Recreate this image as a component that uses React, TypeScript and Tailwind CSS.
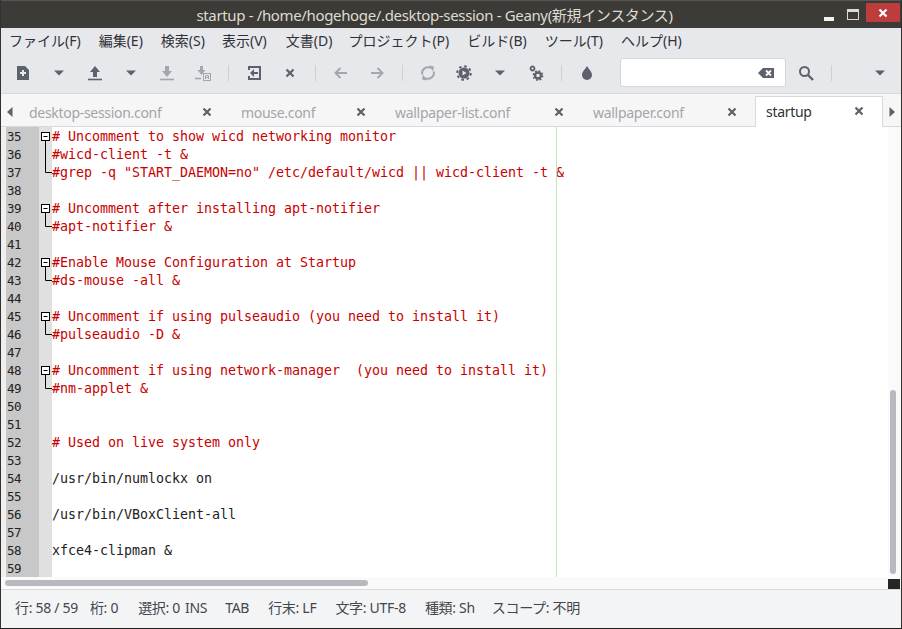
const UI_FONT = "font-['Noto_Sans','Noto_Sans_CJK_JP',sans-serif]";

const MENU = [
  { label: 'ファイル(F)', cls: 'mr-[18px]' },
  { label: '編集(E)', cls: 'mr-[18px]' },
  { label: '検索(S)', cls: 'mr-[17px]' },
  { label: '表示(V)', cls: 'mr-[19px]' },
  { label: '文書(D)', cls: 'mr-[16px]' },
  { label: 'プロジェクト(P)', cls: 'mr-[18px]' },
  { label: 'ビルド(B)', cls: 'mr-[18px]' },
  { label: 'ツール(T)', cls: 'mr-[18px]' },
  { label: 'ヘルプ(H)', cls: '' },
];

const TABS = [
  { name: 'desktop-session.conf', width: 'w-[212px]' },
  { name: 'mouse.conf', width: 'w-[154px]' },
  { name: 'wallpaper-list.conf', width: 'w-[198px]' },
  { name: 'wallpaper.conf', width: 'w-[173px]' },
];

type Fold = 'open' | 'line' | 'end' | '';

const LINES: { n: number; text: string; red?: boolean; fold: Fold }[] = [
  { n: 35, text: '# Uncomment to show wicd networking monitor', red: true, fold: 'open' },
  { n: 36, text: '#wicd-client -t &', red: true, fold: 'line' },
  { n: 37, text: '#grep -q "START_DAEMON=no" /etc/default/wicd || wicd-client -t &', red: true, fold: 'end' },
  { n: 38, text: '', fold: '' },
  { n: 39, text: '# Uncomment after installing apt-notifier', red: true, fold: 'open' },
  { n: 40, text: '#apt-notifier &', red: true, fold: 'end' },
  { n: 41, text: '', fold: '' },
  { n: 42, text: '#Enable Mouse Configuration at Startup', red: true, fold: 'open' },
  { n: 43, text: '#ds-mouse -all &', red: true, fold: 'end' },
  { n: 44, text: '', fold: '' },
  { n: 45, text: '# Uncomment if using pulseaudio (you need to install it)', red: true, fold: 'open' },
  { n: 46, text: '#pulseaudio -D &', red: true, fold: 'end' },
  { n: 47, text: '', fold: '' },
  { n: 48, text: '# Uncomment if using network-manager  (you need to install it)', red: true, fold: 'open' },
  { n: 49, text: '#nm-applet &', red: true, fold: 'end' },
  { n: 50, text: '', fold: '' },
  { n: 51, text: '', fold: '' },
  { n: 52, text: '# Used on live system only', red: true, fold: '' },
  { n: 53, text: '', fold: '' },
  { n: 54, text: '/usr/bin/numlockx on', fold: '' },
  { n: 55, text: '', fold: '' },
  { n: 56, text: '/usr/bin/VBoxClient-all', fold: '' },
  { n: 57, text: '', fold: '' },
  { n: 58, text: 'xfce4-clipman &', fold: '' },
  { n: 59, text: '', fold: '' },
];

function Glyph({ children, w = 16, h = 16 }: { children: React.ReactNode; w?: number; h?: number }) {
  return (
    <svg width={w} height={h} viewBox={`0 0 ${w} ${h}`} className="block">
      {children}
    </svg>
  );
}

function Caret({ fill = '#5c616c' }: { fill?: string }) {
  return (
    <Glyph w={12} h={6}>
      <path d="M1 0.5h10L6 5.5z" fill={fill} />
    </Glyph>
  );
}

function CloseX({ fill = '#5c616c' }: { fill?: string }) {
  return (
    <Glyph w={10} h={10}>
      <path d="M1.5 1.5l7 7M8.5 1.5l-7 7" stroke={fill} strokeWidth="2.2" fill="none" />
    </Glyph>
  );
}

function ToolBtn({ children }: { children: React.ReactNode }) {
  return <div className="w-[36px] shrink-0 flex items-center justify-center">{children}</div>;
}

function ToolSep() {
  return (
    <div className="w-[15px] shrink-0 flex justify-center">
      <div className="w-px h-[16px] bg-[#ced0d4]" />
    </div>
  );
}

function Toolbar() {
  const dark = '#5c616c';
  const dim = '#a4a6ab';
  return (
    <div className="h-[38px] flex items-center pl-[4px] pb-[3px] bg-[#e7e8eb] shrink-0">
      <ToolBtn>
        <Glyph>
          <path d="M2 1h8l4 4v10H2z" fill={dark} />
          <path d="M8 5v6M5 8h6" stroke="#e7e8eb" strokeWidth="2" />
        </Glyph>
      </ToolBtn>
      <ToolBtn><Caret /></ToolBtn>
      <ToolBtn>
        <Glyph>
          <path d="M8 1l5 6h-3v5H6V7H3z" fill={dark} />
          <path d="M1 14.5h14" stroke={dark} strokeWidth="1.6" />
        </Glyph>
      </ToolBtn>
      <ToolBtn><Caret /></ToolBtn>
      <ToolBtn>
        <Glyph>
          <path d="M6 1h4v5h3l-5 6-5-6h3z" fill={dim} />
          <path d="M1 14.5h14" stroke={dim} strokeWidth="1.6" />
        </Glyph>
      </ToolBtn>
      <ToolBtn>
        <Glyph>
          <path d="M5 1h3v4h2.5L6.500 10 2.500 5H5z" fill={dim} />
          <path d="M0 13.500h6" stroke={dim} strokeWidth="1.6" />
          <rect x="8.500" y="8.500" width="7" height="7" fill="none" stroke={dim} />
          <path d="M10.500 14v-3.500h3V14M10.500 12.500h3" fill="none" stroke={dim} />
        </Glyph>
      </ToolBtn>
      <ToolSep />
      <ToolBtn>
        <Glyph>
          <path d="M3 5V2h11v12H3v-3" fill="none" stroke={dark} strokeWidth="2" />
          <path d="M4 8l4-4v3h4v2H8v3z" fill={dark} />
        </Glyph>
      </ToolBtn>
      <ToolBtn><CloseX /></ToolBtn>
      <ToolSep />
      <ToolBtn>
        <Glyph>
          <path d="M14 8H3M7.500 3L2.500 8l5 5" fill="none" stroke={dim} strokeWidth="2" />
        </Glyph>
      </ToolBtn>
      <ToolBtn>
        <Glyph>
          <path d="M2 8h11M8.500 3l5 5-5 5" fill="none" stroke={dim} strokeWidth="2" />
        </Glyph>
      </ToolBtn>
      <ToolSep />
      <ToolBtn>
        <Glyph>
          <path d="M2.200 9.500A6 6 0 0 1 11 3" fill="none" stroke={dim} strokeWidth="2" />
          <path d="M13.800 6.500A6 6 0 0 1 5 13" fill="none" stroke={dim} strokeWidth="2" />
          <path d="M9 0.500l5 1-1 5zM7 15.500l-5-1 1-5z" fill={dim} />
        </Glyph>
      </ToolBtn>
      <ToolBtn>
        <Glyph>
          <circle cx="8" cy="8" r="5.500" fill={dark} />
          <circle cx="8" cy="8" r="6.800" fill="none" stroke={dark} strokeWidth="2" strokeDasharray="2.6 2.74" />
          <path d="M6.500 5.500l4 2.500-4 2.500z" fill="#e7e8eb" />
        </Glyph>
      </ToolBtn>
      <ToolBtn><Caret /></ToolBtn>
      <ToolBtn>
        <Glyph>
          <circle cx="4.500" cy="3.500" r="2" fill="none" stroke={dark} strokeWidth="1.8" />
          <circle cx="10" cy="10.500" r="3" fill="none" stroke={dark} strokeWidth="2.4" />
          <circle cx="10" cy="10.500" r="4.600" fill="none" stroke={dark} strokeWidth="1.6" strokeDasharray="1.8 1.81" />
        </Glyph>
      </ToolBtn>
      <ToolSep />
      <ToolBtn>
        <Glyph>
          <path d="M8 1c1.500 3 5 5.500 5 9a5 5 0 0 1-10 0c0-3.500 3.500-6 5-9z" fill={dark} />
        </Glyph>
      </ToolBtn>
      <div className="w-[166px] h-[29px] shrink-0 ml-[15px] rounded-[3px] bg-white border border-[#d6d7db] flex items-center justify-end pr-[11px]">
        <Glyph w={16} h={12}>
          <path d="M5 1h11v10H5L0 6z" fill={dark} />
          <path d="M8 3.500l5 5M13 3.500l-5 5" stroke="#fff" strokeWidth="1.800" />
        </Glyph>
      </div>
      <div className="w-[37px] shrink-0 flex justify-center ml-px">
        <Glyph>
          <circle cx="6.500" cy="6.500" r="4.500" fill="none" stroke={dark} strokeWidth="2" />
          <path d="M10 10l5 5" stroke={dark} strokeWidth="2.400" />
        </Glyph>
      </div>
      <ToolSep />
      <div className="w-[61px] shrink-0 pl-[20px] flex justify-center"><Caret /></div>
    </div>
  );
}

function FoldMark({ kind }: { kind: Fold }) {
  if (!kind) return null;
  return (
    <svg width="13" height="18" viewBox="0 0 13 18" className="block">
      {kind === 'open' && (
        <>
          <path d="M6.500 13v5" stroke="#000" fill="none" />
          <rect x="2.500" y="5.500" width="8" height="8" fill="#fff" stroke="#000" />
          <path d="M4.500 9.500h4" stroke="#000" fill="none" />
        </>
      )}
      {kind === 'line' && <path d="M6.500 0v18" stroke="#000" fill="none" />}
      {kind === 'end' && <path d="M6.500 0v9.500H13" stroke="#000" fill="none" />}
    </svg>
  );
}

export default function App() {
  return (
    <div className={`w-[902px] h-[629px] flex flex-col overflow-hidden border-x border-b border-x-[#33322f] border-b-[#1d1d1d] bg-white ${UI_FONT}`}>
      {/* title bar */}
      <div className="h-[28px] shrink-0 flex bg-[#3c3b37] border-t border-[#565550]">
        <div className="flex-1 pl-[44px] text-center text-[15px] leading-[29px] tracking-[-0.35px] text-[#dfdbd2] whitespace-nowrap">
          startup - /home/hogehoge/.desktop-session - Geany(新規インスタンス)
        </div>
        <div className="w-[77px] flex items-start">
          <div className="w-[10px] h-[4px] mt-[16px] bg-[#f4f3f1]" />
          <div className="w-[12px] h-[11px] mt-[8px] ml-[13px] border border-[#dfdbd2] border-t-[3px]" />
          <div className="w-[34px] h-[19px] mt-[2px] ml-[7px] rounded-[1px] bg-[#bd3c3c] flex items-center justify-center">
            <CloseX fill="#ffffff" />
          </div>
        </div>
      </div>

      {/* menu bar */}
      <div className="h-[27px] shrink-0 flex items-center pl-[8px] pb-[2px] bg-[#e7e8eb] text-[14px] text-[#2f3136] whitespace-nowrap">
        {MENU.map((m) => (
          <span key={m.label} className={m.cls}>{m.label}</span>
        ))}
      </div>

      <Toolbar />

      {/* tabs */}
      <div className="h-[34px] shrink-0 flex bg-[#f6f6f7] border-y border-[#d8d9dd] text-[14px] tracking-[-0.3px]">
        <div className="w-[17px] pt-[4px] flex items-center justify-center">
          <svg width="6" height="10" viewBox="0 0 6 10"><path d="M5.500 0v10L0 5z" fill="#5c616c" /></svg>
        </div>
        {TABS.map((t) => (
          <div key={t.name} className={`${t.width} flex items-center justify-between pt-[4px] pl-[11px] pr-[18px] text-[#a3a5aa] whitespace-nowrap`}>
            <span>{t.name}</span>
            <CloseX />
          </div>
        ))}
        <div className="w-[128px] mt-[2px] -mb-px flex items-center justify-between pb-[2px] pl-[10px] pr-[18px] bg-white border-x border-t border-[#d8d9dd] text-[#2f3136]">
          <span>startup</span>
          <CloseX />
        </div>
        <div className="flex-1 pt-[4px] flex items-center justify-center">
          <svg width="6" height="10" viewBox="0 0 6 10"><path d="M0.500 0v10L6 5z" fill="#5c616c" /></svg>
        </div>
      </div>

      {/* editor */}
      <div className="h-[450px] shrink-0 flex relative">
        <div className="flex-1 font-['DejaVu_Sans_Mono',monospace]">
          {LINES.map((l) => (
            <div key={l.n} className="h-[18px] flex leading-[18px]">
              <div className="w-[5px] bg-[#efefef]" />
              <div className="w-[33px] pl-px bg-[#c8c8c8] text-[12.500px] text-[#222222] tracking-[-0.600px] pt-px">{l.n}</div>
              <div className="w-[13px] bg-[#e0e0e0]"><FoldMark kind={l.fold} /></div>
              <div className={`pt-px text-[13.330px] tracking-[-0.025px] whitespace-pre ${l.red ? 'text-[#c80000]' : 'text-[#222222]'}`}>{l.text}</div>
            </div>
          ))}
        </div>
        <div className="absolute left-[555px] top-0 bottom-0 w-px bg-[#bfe9b8]" />
        <div className="w-[12px] mr-px bg-[#fafafb] flex flex-col">
          <div className="h-[263px]" />
          <div className="w-[6px] h-[184px] ml-[2px] rounded-full bg-[#b8b9bf]" />
        </div>
      </div>

      {/* horizontal scrollbar */}
      <div className="h-[12px] shrink-0 flex bg-[#fafafb]">
        <div className="flex-1 pl-[4px] pt-[3px]">
          <div className="w-[363px] h-[6px] rounded-full bg-[#b8b9bf]" />
        </div>
        <div className="w-[12px] h-[10px] mt-[2px] mr-px bg-[#262626]" />
      </div>

      {/* status bar */}
      <div className="flex-1 flex items-center pl-[14px] pb-[3px] bg-[#f3f4f6] border-t border-[#d8d9dd] text-[14px] tracking-[-0.3px] text-[#44464c] whitespace-nowrap">
        <span className="mr-[12px]">行: 58 / 59</span>
        <span className="mr-[20px]">桁: 0</span>
        <span className="mr-[5px]">選択: 0</span>
        <span className="mr-[18px]">INS</span>
        <span className="mr-[19px]">TAB</span>
        <span className="mr-[19px]">行末: LF</span>
        <span className="mr-[19px]">文字: UTF-8</span>
        <span className="mr-[17px]">種類: Sh</span>
        <span>スコープ: 不明</span>
      </div>
    </div>
  );
}
